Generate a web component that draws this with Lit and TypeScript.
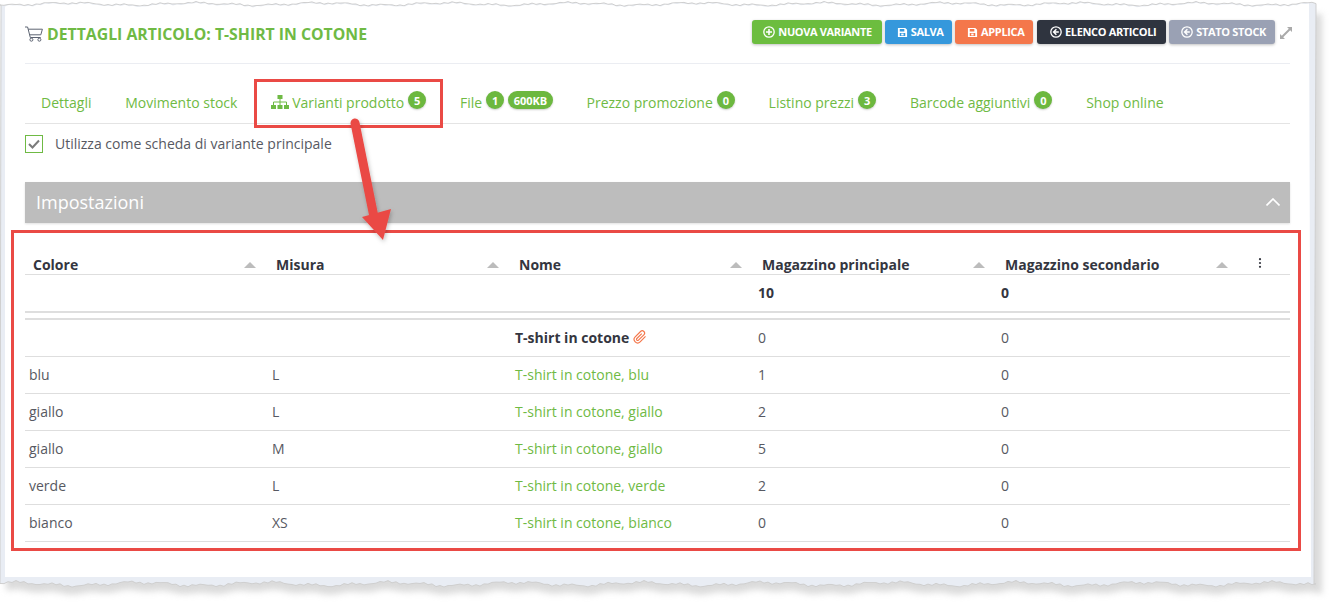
import { LitElement, html, css, svg } from "lit";
import { customElement } from "lit/decorators.js";

const GREEN = "#6fba44";

const tabs = [
  { label: "Dettagli" },
  { label: "Movimento stock" },
  { label: "Varianti prodotto", icon: true, badges: ["5"] },
  { label: "File", badges: ["1", "600KB"] },
  { label: "Prezzo promozione", badges: ["0"] },
  { label: "Listino prezzi", badges: ["3"] },
  { label: "Barcode aggiuntivi", badges: ["0"] },
  { label: "Shop online" },
];

const columns = ["Colore", "Misura", "Nome", "Magazzino principale", "Magazzino secondario"];

const rows = [
  ["blu", "L", "T-shirt in cotone, blu", "1", "0"],
  ["giallo", "L", "T-shirt in cotone, giallo", "2", "0"],
  ["giallo", "M", "T-shirt in cotone, giallo", "5", "0"],
  ["verde", "L", "T-shirt in cotone, verde", "2", "0"],
  ["bianco", "XS", "T-shirt in cotone, bianco", "0", "0"],
];

// wobbly torn paper edge, always the same for a given seed
function tornEdge(y: number, from: number, to: number, amp: number, seed: number) {
  const pts: string[] = [];
  const dir = to > from ? 1 : -1;
  for (let x = from; dir > 0 ? x <= to : x >= to; x += dir * 4) {
    const n =
      Math.sin(x * 0.05 + seed) * 0.45 +
      Math.sin(x * 0.17 + seed * 2) * 0.3 +
      Math.sin(x * 0.71 + seed * 3) * 0.25;
    pts.push(`${x},${(y + n * amp).toFixed(1)}`);
  }
  return pts.join(" L");
}

const circlePlus = html`<svg class="ico" viewBox="0 0 12 12"><circle cx="6" cy="6" r="5.2" fill="none" stroke="#fff" stroke-width="1.3"/><path d="M6 3v6M3 6h6" stroke="#fff" stroke-width="1.6"/></svg>`;
const floppy = html`<svg class="ico flop" viewBox="0 0 12 12"><path fill="#fff" fill-rule="evenodd" d="M1 1h8l2 2v8H1zM3 2.2v2.6h5V2.2zM3 6.5v3.4h6V6.5z"/><rect x="4.6" y="7.2" width="2.6" height="2" fill="#fff"/></svg>`;
const circleLeft = html`<svg class="ico" viewBox="0 0 12 12"><circle cx="6" cy="6" r="5.2" fill="none" stroke="#fff" stroke-width="1.3"/><path d="M6.4 3.2 3.6 6l2.8 2.8M3.8 6h5" fill="none" stroke="#fff" stroke-width="1.5"/></svg>`;

const buttons = [
  { label: "Nuova variante", cls: "green", icon: circlePlus },
  { label: "Salva", cls: "blue", icon: floppy },
  { label: "Applica", cls: "orange", icon: floppy },
  { label: "Elenco articoli", cls: "dark", icon: circleLeft },
  { label: "Stato stock", cls: "grey", icon: circleLeft },
];

@customElement("app-root")
export class AppRoot extends LitElement {
  static styles = css`
    :host {
      display: block;
      position: relative;
      width: 1331px;
      height: 602px;
      overflow: hidden;
      background: #fff;
      font-family: "Open Sans", "DejaVu Sans", sans-serif;
      font-size: 14px;
      color: #575962;
    }
    .paper, .overlay {
      position: absolute;
      left: 0;
      top: 0;
      width: 1331px;
      height: 602px;
    }
    .overlay { pointer-events: none; }
    .page {
      position: relative;
      width: 1265px;
      padding: 20px 0 0 25px;
    }

    .head {
      display: flex;
      align-items: center;
      justify-content: space-between;
      height: 24px;
      padding-bottom: 19px;
      border-bottom: 1px solid #ebedf2;
    }
    .title {
      display: flex;
      align-items: center;
      gap: 4px;
      margin-top: 4px;
      font-size: 15.8px;
      font-weight: 700;
      color: ${css([GREEN] as any)};
      text-transform: uppercase;
    }
    .cart { width: 18px; height: 16px; }
    .actions { display: flex; align-items: center; gap: 3px; margin-right: -2px; }
    .btn {
      display: flex;
      align-items: center;
      gap: 3px;
      height: 24px;
      box-sizing: border-box;
      padding: 0 9px 2px 11px;
      border-radius: 3px;
      color: #fff;
      font-size: 11px;
      font-weight: 700;
      text-transform: uppercase;
      letter-spacing: -0.35px;
      box-shadow: 0 1px 3px rgba(0, 0, 0, 0.25);
    }
    .btn.green { background: #6cbd3f; padding-right: 10px; }
    .btn.blue { background: #3598dc; padding-left: 12px; padding-right: 8.5px; }
    .btn.orange { background: #f4774b; padding-left: 12px; padding-right: 8.5px; margin-right: 1px; }
    .btn.dark { background: #2f343f; padding-left: 13px; padding-right: 10px; }
    .btn.grey { background: #9aa1b4; padding-left: 12px; }
    .ico { width: 12px; height: 12px; margin-top: 2px; }
    .ico.flop { width: 11px; height: 11px; }
    .expand { width: 12px; height: 12px; margin: 2px 0 0 2px; }

    .tabs {
      display: flex;
      align-items: center;
      gap: 33.8px;
      height: 60px;
      padding: 17px 0 0 16px;
      box-sizing: border-box;
      border-bottom: 1px solid #e4e4e4;
      color: ${css([GREEN] as any)};
    }
    .tab { display: flex; align-items: center; white-space: nowrap; }
    .tree { width: 18px; height: 14px; margin-right: 3px; }
    .badge {
      display: inline-flex;
      align-items: center;
      justify-content: center;
      min-width: 18px;
      height: 18px;
      margin: -4px 0 0 4px;
      border-radius: 9px;
      background: #6cb83f;
      color: #fff;
      font-size: 11px;
      font-weight: 700;
      box-sizing: border-box;
      box-shadow: 0 1px 2px rgba(0, 0, 0, 0.2);
    }
    .badge.wide { padding: 0 5.5px; }

    .check-row {
      display: flex;
      align-items: center;
      gap: 12px;
      height: 18px;
      margin-top: 11px;
    }
    .check-label { margin-top: -2px; }
    .box {
      display: flex;
      align-items: center;
      justify-content: center;
      width: 18px;
      height: 18px;
      box-sizing: border-box;
      border: 1px solid ${css([GREEN] as any)};
    }
    .box svg { width: 12px; height: 10px; }

    .bar {
      display: flex;
      align-items: center;
      justify-content: space-between;
      height: 41px;
      box-sizing: border-box;
      margin-top: 29px;
      padding: 0 10px 2px 11px;
      background: #bdbdbd;
      color: #fff;
      font-size: 18px;
      box-shadow: 0 1px 2px rgba(0, 0, 0, 0.12);
    }
    .chev { width: 14px; height: 8px; }

    .grid-row {
      display: grid;
      grid-template-columns: repeat(5, 243px) 50px;
      align-items: center;
      border-bottom: 1px solid #dedede;
    }
    .grid-row > div { padding: 0 0 2px 4px; white-space: nowrap; }
    .th-row {
      margin-top: 21px;
      padding-top: 10px;
      height: 20px;
      font-weight: 700;
      color: #34363f;
    }
    .th-row > div.th {
      display: flex;
      align-items: center;
      justify-content: space-between;
      padding: 0 12px 0 8px;
    }
    .sort {
      width: 0;
      height: 0;
      border-left: 6px solid transparent;
      border-right: 6px solid transparent;
      border-bottom: 6px solid #bcbcbc;
      margin-top: 1px;
    }
    .kebab { width: 4px; height: 10px; margin-left: 14px; display: block; }
    .sum-row {
      height: 36px;
      border-bottom: 2px solid #dedede;
      font-weight: 700;
      color: #34363f;
    }
    .parent {
      height: 36px;
      margin-top: 5px;
      border-top: 2px solid #dedede;
    }
    .line { height: 36px; }
    .name-bold {
      display: flex;
      align-items: center;
      gap: 4px;
      font-weight: 700;
      color: #34363f;
    }
    .clip { width: 14px; height: 14px; }
    .link { color: ${css([GREEN] as any)}; }
  `;

  renderPaper() {
    const top = tornEdge(4, 0, 1316, 2.5, 1.3);
    const bottom = tornEdge(584, 1316, 0, 3.5, 4.1);
    const inner = tornEdge(5, 5, 1311, 2.5, 1.3);
    return html`<svg class="paper" viewBox="0 0 1331 602">
      <defs><filter id="soft" x="-5%" y="-5%" width="110%" height="110%"><feGaussianBlur stdDeviation="3"/></filter></defs>
      ${svg`
        <path d="M6 14 L1322 14 L1322 ${592} L${tornEdge(592, 1322, 6, 3.5, 4.1)} Z" fill="#bdbdbd" opacity="0.55" filter="url(#soft)"/>
        <path d="M1,${top.split(" L")[0].split(",")[1]} L${top} L1314,584 L${bottom} Z" fill="#e9edf4" stroke="#cfcfcf"/>
        <path d="M${inner} L1311,577 L5,577 Z" fill="#fff"/>
      `}
    </svg>`;
  }

  renderOverlay() {
    return html`<svg class="overlay" viewBox="0 0 1331 602">
      <defs><filter id="drop" x="-30%" y="-30%" width="160%" height="160%"><feDropShadow dx="1" dy="2" stdDeviation="2" flood-color="#000" flood-opacity="0.25"/></filter></defs>
      <rect x="255.5" y="80.5" width="186" height="46" fill="none" stroke="#ea4a45" stroke-width="3"/>
      <rect x="12.5" y="231.5" width="1287" height="318" fill="none" stroke="#ea4a45" stroke-width="3"/>
      <g filter="url(#drop)">
        <path d="M355 123 L375 222" stroke="#ea4a45" stroke-width="9" stroke-linecap="round" fill="none"/>
        <path d="M362 217 L391 209 L383 240 Z" fill="#ea4a45"/>
      </g>
    </svg>`;
  }

  render() {
    return html`
      ${this.renderPaper()}
      <div class="page">
        <div class="head">
          <div class="title">
            <svg class="cart" viewBox="0 0 18 16" fill="none" stroke="#5d6472" stroke-width="1">
              <path d="M0 1h2.6l2.7 10.5h10.4M3.2 3.2H17.4l-1.6 5.6H4.6"/>
              <circle cx="6.4" cy="13.7" r="1.5"/><circle cx="14.4" cy="13.7" r="1.5"/>
            </svg>
            Dettagli articolo: T-shirt in cotone
          </div>
          <div class="actions">
            ${buttons.map(b => html`<div class="btn ${b.cls}">${b.icon}${b.label}</div>`)}
            <svg class="expand" viewBox="0 0 12 12" fill="#aaa">
              <path d="M7 0h5v5l-1.8-1.8L3.2 10.2 5 12H0V7l1.8 1.8 7-7z"/>
            </svg>
          </div>
        </div>

        <div class="tabs">
          ${tabs.map(t => html`
            <div class="tab">
              ${t.icon ? html`<svg class="tree" viewBox="0 0 18 14" fill="${GREEN}">
                <rect x="6.5" width="5" height="4"/><rect y="10" width="5" height="4"/><rect x="6.5" y="10" width="5" height="4"/><rect x="13" y="10" width="5" height="4"/>
                <path d="M2.5 10V7h13v3M9 4v6" fill="none" stroke="${GREEN}"/>
              </svg>` : ""}
              ${t.label}
              ${(t.badges || []).map(b => html`<span class="badge ${b.length > 1 ? "wide" : ""}">${b}</span>`)}
            </div>
          `)}
        </div>

        <div class="check-row">
          <div class="box">
            <svg viewBox="0 0 12 10" fill="none" stroke="#7b7b7b" stroke-width="2"><path d="M1 5l3.5 3.5L11 1.5"/></svg>
          </div>
          <span class="check-label">Utilizza come scheda di variante principale</span>
        </div>

        <div class="bar">
          Impostazioni
          <svg class="chev" viewBox="0 0 14 8" fill="none" stroke="#fff" stroke-width="1.6"><path d="M0.5 7.5 7 1l6.5 6.5"/></svg>
        </div>

        <div class="grid-row th-row">
          ${columns.map(c => html`<div class="th">${c}<span class="sort"></span></div>`)}
          <div>
            <svg class="kebab" viewBox="0 0 4 10" fill="#34363f"><circle cx="2" cy="1.2" r="1.1"/><circle cx="2" cy="5" r="1.1"/><circle cx="2" cy="8.8" r="1.1"/></svg>
          </div>
        </div>
        <div class="grid-row sum-row">
          <div></div><div></div><div></div><div>10</div><div>0</div><div></div>
        </div>
        <div class="grid-row parent">
          <div></div><div></div>
          <div class="name-bold">T-shirt in cotone
            <svg class="clip" viewBox="0 0 24 24" fill="none" stroke="#f4774b" stroke-width="2"><path d="M21.44 11.05l-9.19 9.19a6 6 0 0 1-8.49-8.49l9.19-9.19a4 4 0 0 1 5.66 5.66l-9.2 9.19a2 2 0 0 1-2.83-2.83l8.49-8.48"/></svg>
          </div>
          <div>0</div><div>0</div><div></div>
        </div>
        ${rows.map(r => html`
          <div class="grid-row line">
            <div>${r[0]}</div><div>${r[1]}</div><div class="link">${r[2]}</div><div>${r[3]}</div><div>${r[4]}</div><div></div>
          </div>
        `)}
      </div>
      ${this.renderOverlay()}
    `;
  }
}
